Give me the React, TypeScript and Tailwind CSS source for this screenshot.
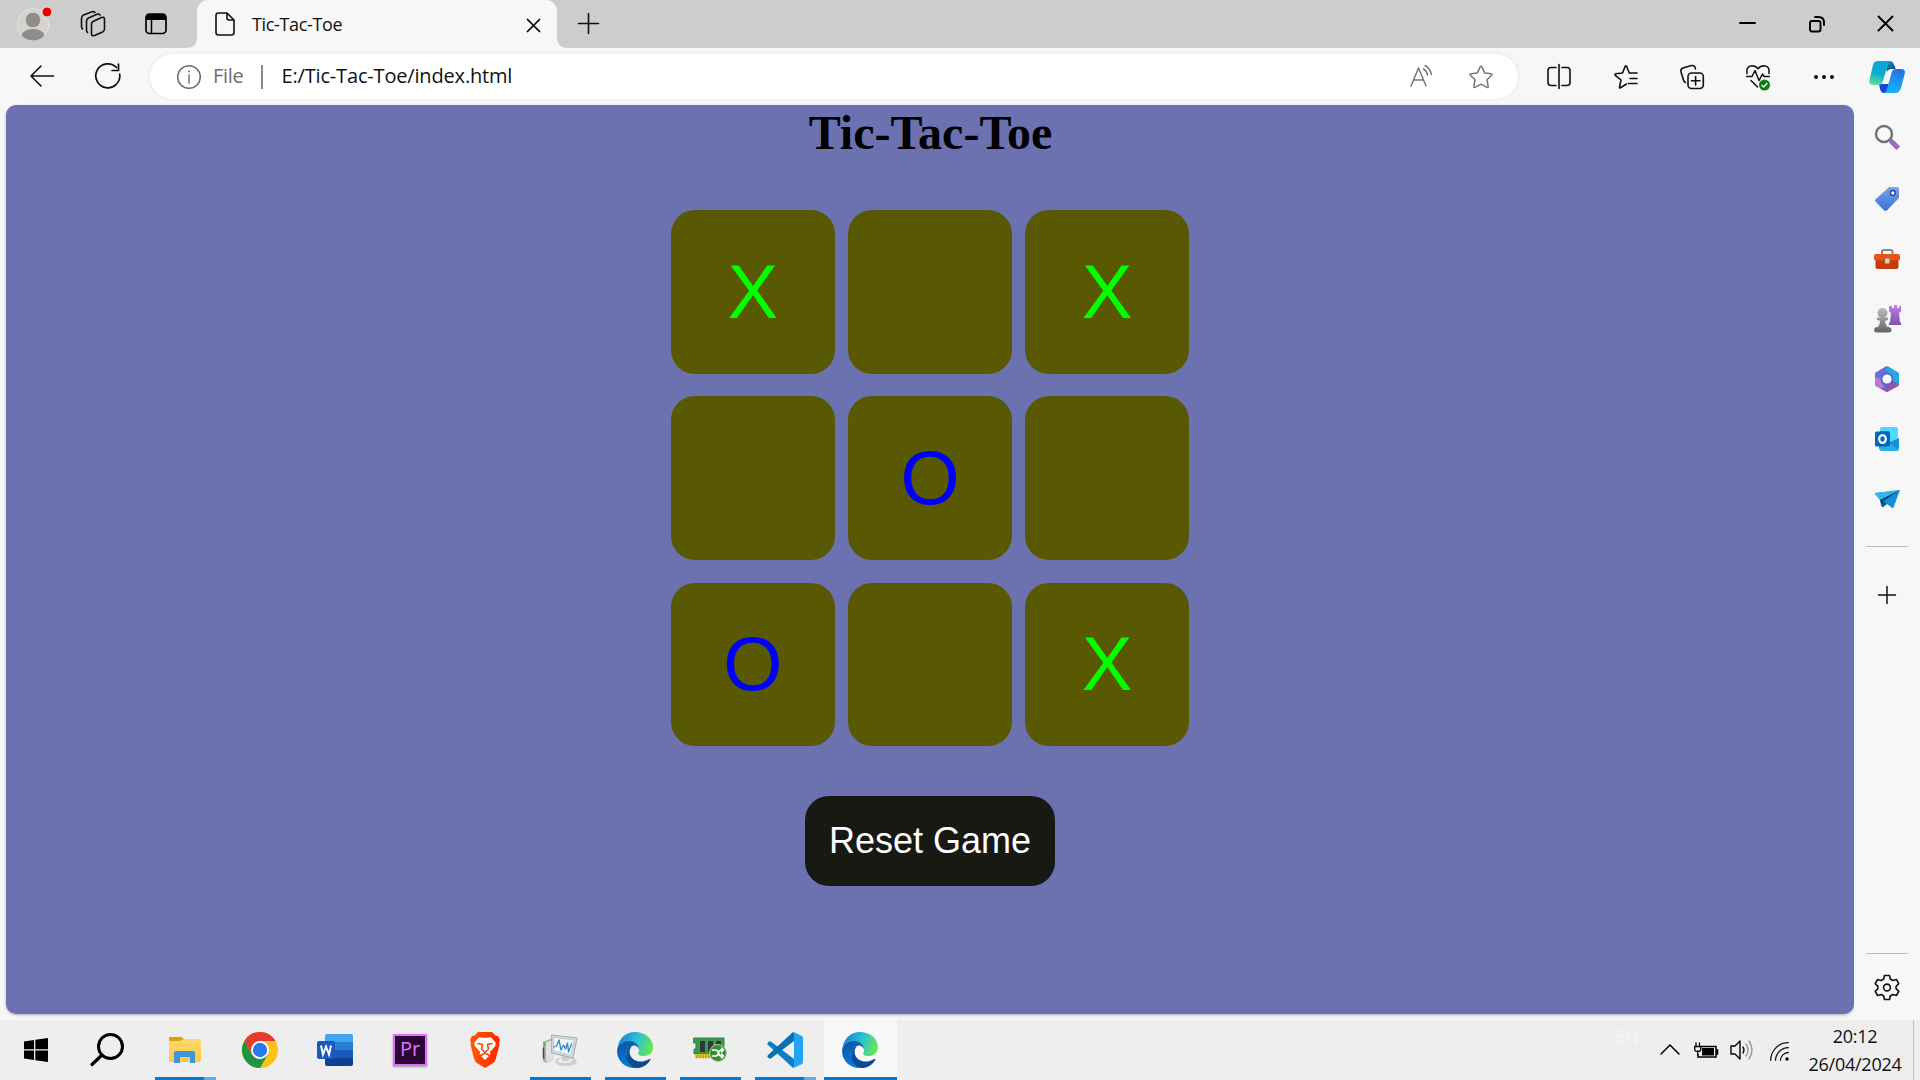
import type { ReactNode } from "react";

type IconProps = { w: number; h: number; children: ReactNode; className?: string };

function Icon({ w, h, children, className = "" }: IconProps) {
  return (
    <svg width={w} height={h} viewBox={`0 0 ${w} ${h}`} fill="none" strokeLinecap="round" strokeLinejoin="round" className={`shrink-0 overflow-visible ${className}`}>
      {children}
    </svg>
  );
}

function Slot({ className, children }: { className: string; children: ReactNode }) {
  return <div className={`flex shrink-0 items-center justify-center ${className}`}>{children}</div>;
}

function TabStrip() {
  return (
    <header className="flex h-12 bg-[#cdcdcd] text-black">
      <Slot className="ml-3 w-[42px]">
        <Icon w={36} h={36}>
          <circle cx="18" cy="18.500" r="16" fill="#d4d3d0" stroke="#e3e2df" />
          <circle cx="18" cy="14" r="7.300" fill="#8f8c89" />
          <path d="M6.500 29.500C8 25 12.500 23 18 23s10 2 11.500 6.500A16 16 0 0 1 18 34.500 16 16 0 0 1 6.500 29.500Z" fill="#8f8c89" />
          <circle cx="32" cy="6" r="5" fill="#e60000" stroke="#f2dede" />
        </Icon>
      </Slot>
      <Slot className="ml-[18px] w-[42px]">
        <Icon w={26} h={26}>
          <g stroke="#111" strokeWidth="1.600">
            <path d="M13 10.500 21.500 6.500Q24.500 5.500 24.500 8.500V18Q24.500 20 22.500 21L14.500 24.500Q11.500 25.500 11.500 22.500V13Q11.500 11.200 13 10.500Z" />
            <path d="M7.500 21.500Q6.500 20.500 6.500 19V10Q6.500 8 8.500 7L17 3.300Q19 2.500 20 4" />
            <path d="M2.500 18Q1.500 17 1.500 15.500V7.500Q1.500 5 3.500 4L12 .8Q14 .3 15 1.500" />
          </g>
        </Icon>
      </Slot>
      <Slot className="ml-[21px] w-[42px]">
        <Icon w={22} h={22}>
          <rect x="1" y="1" width="20" height="19.500" rx="3.500" stroke="#000" strokeWidth="1.700" />
          <path d="M1 7V4q0-3 3-3h14q3 0 3 3v3Z" fill="#000" />
          <path d="M6.500 7v13" stroke="#000" strokeWidth="1.500" />
        </Icon>
      </Slot>
      <div className="ml-[9px] flex w-[382px] items-stretch">
        <div className="flex w-[11px] items-end">
          <Icon w={11} h={11}><path d="M11 0v11H0Q11 11 11 0" fill="#f7f7f7" /></Icon>
        </div>
        <div className="flex h-12 w-[360px] items-center rounded-t-[11px] bg-[#f7f7f7] pl-[18px]">
          <Icon w={20} h={24}>
            <path d="M3.500 1H12l7 7v12.500Q19 23 16.500 23h-13Q1 23 1 20.500v-17Q1 1 3.500 1ZM12 1v5q0 2 2 2h5" stroke="#111" strokeWidth="1.600" />
          </Icon>
          <span className="ml-[17px] w-[257px] shrink-0 whitespace-nowrap font-['Open_Sans',sans-serif] text-[18px] leading-6 tracking-[-0.35px] text-[#111]">Tic-Tac-Toe</span>
          <Slot className="w-[48px]">
            <Icon w={13} h={13} className="mt-[2px]"><path d="m.5.500 12 12m0-12-12 12" stroke="#000" strokeWidth="1.700" /></Icon>
          </Slot>
        </div>
        <div className="flex w-[11px] items-end">
          <Icon w={11} h={11}><path d="M0 0v11h11Q0 11 0 0" fill="#f7f7f7" /></Icon>
        </div>
      </div>
      <Slot className="w-10">
        <Icon w={21} h={21} className="-mt-px"><path d="M10.500.5v20M.5 10.500h20" stroke="#111" strokeWidth="1.600" /></Icon>
      </Slot>
      <div className="ml-auto flex">
        <Slot className="w-[69px]"><Icon w={15} h={2} className="-mt-[2px]"><path d="M0 1h15" stroke="#000" strokeWidth="2" /></Icon></Slot>
        <Slot className="w-[69px]">
          <Icon w={16} h={16} className="-mt-px">
            <rect x="1" y="5" width="10.500" height="10.500" rx="2" stroke="#000" strokeWidth="1.900" />
            <path d="M6 1h3.500Q15 1 15 6.500V9" stroke="#000" strokeWidth="1.900" />
          </Icon>
        </Slot>
        <Slot className="w-[69px]"><Icon w={15} h={15} className="-mt-px"><path d="m.5.5 14 14m0-14-14 14" stroke="#000" strokeWidth="1.900" /></Icon></Slot>
      </div>
    </header>
  );
}

function Copilot() {
  return (
    <Icon w={36} h={34}>
      <defs>
        <linearGradient id="cpA" x1="10" y1="0" x2="4" y2="25" gradientUnits="userSpaceOnUse"><stop stopColor="#08a8dd" /><stop offset=".5" stopColor="#0ba9cf" /><stop offset="1" stopColor="#63e29a" /></linearGradient>
        <linearGradient id="cpB" x1="30" y1="9" x2="22" y2="33" gradientUnits="userSpaceOnUse"><stop stopColor="#2870df" /><stop offset="1" stopColor="#15b6fb" /></linearGradient>
        <linearGradient id="cpC" x1="18" y1="2" x2="26" y2="11" gradientUnits="userSpaceOnUse"><stop stopColor="#0b96c0" /><stop offset="1" stopColor="#0a4776" /></linearGradient>
      </defs>
      <path d="M15 1h5q4 0 5.200 4l1.500 4H23q-4 0-5 3Z" fill="url(#cpC)" />
      <path d="M10 24h10l-2 9h-3q-3 0-4-4Z" fill="#1548d5" />
      <path d="M9 1h14q-3 0-4 3l-5 17q-1 4-5 4H4Q-1 25 .7 19L4 5Q5 1 9 1Z" fill="url(#cpA)" />
      <path d="M27 9h5q5 0 3.700 5L32 28q-1.500 5-6 5H14q3 0 4-4l4.500-16Q23.500 9 27 9Z" fill="url(#cpB)" />
    </Icon>
  );
}

function Toolbar() {
  return (
    <div className="flex h-[57px] items-center bg-[#f7f7f7]">
      <Slot className="ml-[9px] w-[66px]">
        <Icon w={24} h={22} className="-mt-px"><path d="M23.500 11H1M11 1 1 11l10 10" stroke="#111" strokeWidth="1.600" /></Icon>
      </Slot>
      <Slot className="w-[66px]">
        <Icon w={26} h={26} className="-mt-px"><path d="M24.700 11A12 12 0 1 1 21.500 4.500M23.500 1v6.500H17" stroke="#111" strokeWidth="1.700" /></Icon>
      </Slot>
      <div className="ml-[9px] flex h-[45px] w-[1368px] items-center rounded-full bg-white font-['Open_Sans',sans-serif] text-[20px] leading-7 shadow-[0_0_4px_rgba(0,0,0,0.09)]">
        <Icon w={24} h={24} className="ml-[27px]">
          <circle cx="12" cy="12" r="11.300" stroke="#6e6e6e" strokeWidth="1.500" />
          <path d="M12 10v8" stroke="#6e6e6e" strokeWidth="1.500" /><circle cx="12" cy="6.500" r="1" fill="#6e6e6e" />
        </Icon>
        <span className="mb-px ml-3 w-[47px] whitespace-nowrap tracking-[-0.3px] text-[#6e6e6e]">File</span>
        <span className="ml-px h-6 w-[1.500px] bg-[#8b8b8b]" />
        <span className="mb-px ml-[19px] whitespace-nowrap tracking-[-0.17px] text-[#111]">E:/Tic-Tac-Toe/index.html</span>
        <div className="ml-auto mr-[8px] flex">
          <Slot className="w-[59px]">
            <Icon w={24} h={24} className="-mt-px">
              <g stroke="#777" strokeWidth="1.500"><path d="m1 22 7.500-18L16 22M3.700 16h9.600" /><path d="M13.500 5q3.500 2 4 6M15 1.500q5 2.500 6.500 9" /></g>
            </Icon>
          </Slot>
          <Slot className="w-[59px]">
            <Icon w={24} h={24}><path d="M12 1.200q.6 0 1 .9l2.600 5.800 6.500.8q1.600.3.500 1.600L18 14.800l1.200 6.700q.2 1.500-1.200.9L12 19.200l-6 3.200q-1.400.6-1.200-.9L6 14.800 1.400 10.300Q.3 9 1.900 8.700l6.500-.8L11 2.100q.4-.9 1-.9Z" stroke="#777" strokeWidth="1.500" /></Icon>
          </Slot>
        </div>
      </div>
      <Slot className="ml-[7px] w-[67px]">
        <Icon w={24} h={25}><path d="M9 3.500H4q-3 0-3 3v12q0 3 3 3h5M15 3.500h5q3 0 3 3v12q0 3-3 3h-5M12 .5v24" stroke="#111" strokeWidth="1.600" /></Icon>
      </Slot>
      <Slot className="w-[67px]">
        <Icon w={24} h={24}><path d="m12.500 19-6 3.800q-1.200.5-1-.8L7 15 1.300 10.300q-1-1.200.5-1.500L8.500 8 11 1.700q.9-1.700 1.800 0L15.300 8H23M16 13.500h7M14.500 18.500H23" stroke="#111" strokeWidth="1.600" /></Icon>
      </Slot>
      <Slot className="w-[66px]">
        <Icon w={24} h={24}>
          <rect x="8" y="8" width="15.300" height="15.500" rx="3.500" stroke="#111" strokeWidth="1.600" />
          <path d="M15.600 11.500v8.500M11.400 15.700H20M5.500 17.500Q4 17 3.500 15L1 7Q.3 4 3 3l8.500-2.500Q15 0 15.500 4" stroke="#111" strokeWidth="1.600" />
        </Icon>
      </Slot>
      <Slot className="w-[66px]">
        <Icon w={24} h={26}>
          <path d="M1 9.500Q-.2 2 6 1.700q3.500 0 6 3 2.500-3 6-3 6.200.3 5 7.800M.7 12.500H6l3-6 4 10 3.500-6.500 1.500 2.500h5.300M5 16.500l6.500 6.500" stroke="#111" strokeWidth="1.500" />
          <circle cx="18.500" cy="21" r="5.500" fill="#107c10" /><path d="m16 21.500 1.700 1.500 3.200-3.500" stroke="#fff" strokeWidth="1.300" />
        </Icon>
      </Slot>
      <Slot className="w-[65px]">
        <Icon w={20} h={4}><circle cx="2" cy="2" r="2" fill="#111" /><circle cx="10" cy="2" r="2" fill="#111" /><circle cx="18" cy="2" r="2" fill="#111" /></Icon>
      </Slot>
      <Slot className="w-[62px]"><Copilot /></Slot>
    </div>
  );
}

const board = ["X", "", "X", "", "O", "", "O", "", "X"];

function Game() {
  return (
    <main className="ml-[6px] flex h-[909px] w-[1848px] shrink-0 flex-col items-center rounded-[10px] bg-[#6c71b0] shadow-[0_1px_3px_rgba(0,0,0,0.3)]">
      <h1 className="h-[105px] pl-px font-['Liberation_Serif',serif] text-[48px] font-bold leading-[56px] text-black">Tic-Tac-Toe</h1>
      <div className="grid grid-cols-[repeat(3,163.600px)] gap-x-[13.600px] gap-y-[22.700px]">
        {board.map((mark, i) => (
          <button key={i} className={`h-[163.600px] rounded-[24px] bg-[#595903] font-['Liberation_Sans',sans-serif] text-[76px] leading-none ${mark === "X" ? "text-[#00ff00]" : "text-[#0000ff]"}`}>{mark}</button>
        ))}
      </div>
      <button className="mt-[50px] h-[90px] w-[250px] rounded-[24px] bg-[#191913] font-['Liberation_Sans',sans-serif] text-[36px] leading-none text-white">Reset Game</button>
    </main>
  );
}

function Sidebar() {
  return (
    <aside className="flex w-[66px] flex-col items-center bg-[#f7f7f7]">
      <Slot className="mt-px h-[62px]">
        <Icon w={26} h={26}>
          <circle cx="10" cy="10" r="8" stroke="#747474" strokeWidth="2.500" fill="#fafafa" />
          <path d="m16 16 2 2" stroke="#777" strokeWidth="3" /><path d="m18.500 18.500 4 4" stroke="#9a67cd" strokeWidth="5" strokeLinecap="square" />
        </Icon>
      </Slot>
      <Slot className="h-[61px]">
        <Icon w={24} h={24}>
          <defs><linearGradient id="tag" x1="0" y1="0" x2="0" y2="1"><stop stopColor="#73a6ef" /><stop offset="1" stopColor="#416ed1" /></linearGradient></defs>
          <path d="M14.500 0H22q2 0 2 2v8q0 1-1 2L12 23.200q-1.500 1.200-3 0L.8 15q-1.600-1.500 0-3L13 1q.5-1 1.500-1Z" fill="url(#tag)" />
          <circle cx="17.800" cy="6" r="2.400" fill="#fff" stroke="#244b91" strokeWidth="1.500" />
        </Icon>
      </Slot>
      <Slot className="h-[60px]">
        <Icon w={26} h={20}>
          <path d="M8 5V3q0-2 2-2h6.500q2 0 2 2v2" stroke="#858585" strokeWidth="2" />
          <path d="M1.500 10h23v8q0 2-2 2h-19q-2 0-2-2Z" fill="#c63d0b" /><path d="M2 5h22q2 0 2 2v3.500q0 .8-1 .8H1q-1 0-1-.8V7q0-2 2-2Z" fill="#e35415" />
          <rect x="11" y="9.500" width="4.500" height="5" rx="1" fill="#cfcfcf" />
        </Icon>
      </Slot>
      <Slot className="h-[60px]">
        <Icon w={27} h={28}>
          <defs>
            <linearGradient id="rook" x1="0" y1="0" x2="0" y2="1"><stop stopColor="#ba80e6" /><stop offset="1" stopColor="#7e53a8" /></linearGradient>
            <linearGradient id="pawn" x1="0" y1="3" x2="0" y2="27" gradientUnits="userSpaceOnUse"><stop stopColor="#bcbcbc" /><stop offset="1" stopColor="#666" /></linearGradient>
          </defs>
          <path d="M15 1h3v2h2V0h3v3h2V1h2v5q0 1-2 2l1 9q2 1 1 3H15q-1-2 1-3l1-9q-2-1-2-3Z" fill="url(#rook)" />
          <circle cx="8.500" cy="8" r="5" fill="url(#pawn)" /><path d="M3 12.500h11q1 2-1 3h-2q0 4 2.500 6.500h1.500q2.500.5 2.500 3t-3 2.500H3q-3 0-3-2.500T2.500 22H4q2-2.500 2-6.500H4q-2-1-1-3Z" fill="url(#pawn)" />
        </Icon>
      </Slot>
      <Slot className="h-[60px]">
        <Icon w={24} h={26}>
          <path d="M11 .600Q12 0 13 .600L23 6.500q1 .700 1 2V18q0 1.200-1 2l-10 5.500q-1 .6-2 0L1 20q-1-.8-1-2V8.500q0-1.300 1-2Z" fill="#506bd0" />
          <path d="M11 .600 1 6.500q-1 .700-1 2V18q0 1.200 1 2l5 2.700V11q0-2 2-3l3-2q2-3 0-5.400Z" fill="#6c6fd0" />
          <path d="M0 12V18q0 1.200 1 2l5 2.700 4-2.200Q6 18 6 14.500Q4 11 0 12Z" fill="#ba78da" />
          <path d="M24 17v1q0 1.200-1 2l-10 5.500q-1 .6-2 0L6 22.700l10-5.500q2-1 2-4Z" fill="#8d57ad" />
          <path d="M13 .600 23 6.500q1 .700 1 2V17q-1 1-2.500 0L18 14.500V11q0-2-2-3l-3.500-2Q9 3 13 .600Z" fill="#26a9df" />
          <circle cx="12" cy="13" r="4.600" fill="#f9f9f9" />
        </Icon>
      </Slot>
      <Slot className="h-[60px]">
        <Icon w={24} h={24}>
          <rect x="5" y="0" width="18" height="15" rx="2" fill="#50d9ff" /><path d="M5 4h9v10H5Z" fill="#119be0" />
          <path d="M24 11v10q0 2-2 2H7l-3-2V12l9 4Z" fill="#1492d6" /><path d="m13 16 11 6.500q-.5 1.500-2 1.500H6q-2-1-2-3Z" fill="#27b0e5" />
          <rect y="4.500" width="15" height="15" rx="1.500" fill="#0768ba" /><ellipse cx="7.500" cy="12" rx="3.300" ry="3.900" stroke="#fff" strokeWidth="2.200" />
        </Icon>
      </Slot>
      <Slot className="h-[60px]">
        <Icon w={25} h={19}>
          <path d="M0 3 25 0 18.500 17.500q-.5 1-1.500.3L12 14l-4 3-1.500-.5L5 10 .500 4.500Q-.5 3.300 0 3Z" fill="#178fd5" /><path d="M0 3 25 0 5 10 .500 4.500Q-.5 3.300 0 3Z" fill="#32b8e6" /><path d="m5 10 20-10L8.500 11l-1.500 6Z" fill="#0a427f" /><path d="m8.500 11 3.500 3-5 3.500Z" fill="#0c579b" />
        </Icon>
      </Slot>
      <div className="mt-[17px] h-px w-[42px] bg-[#bcbcbc]" />
      <Slot className="mr-px mt-[39px] h-[18px]"><Icon w={18} h={18}><path d="M9 .5v17M.5 9h17" stroke="#111" strokeWidth="1.500" /></Icon></Slot>
      <div className="mt-[349px] h-px w-[42px] bg-[#bcbcbc]" />
      <Slot className="mt-[20px] h-[26px]">
        <Icon w={26} h={26}>
          <path d="M10.500 1.500h5l.8 3.500 2.500 1.500 3.600-1 2.400 4.200-2.700 2.600v2.400l2.700 2.600-2.400 4.200-3.600-1-2.500 1.500-.8 3.500h-5L9.700 22l-2.500-1.500-3.600 1-2.400-4.200 2.700-2.600v-2.400L1.200 9.700l2.400-4.200 3.600 1L9.700 5Z" stroke="#111" strokeWidth="1.600" /><circle cx="13" cy="13.500" r="3.400" stroke="#111" strokeWidth="1.600" />
        </Icon>
      </Slot>
    </aside>
  );
}

function EdgeLogo({ id }: { id: string }) {
  return (
    <Icon w={36} h={36}>
      <defs>
        <linearGradient id={`${id}g`} x1="4" y1="7" x2="34" y2="18" gradientUnits="userSpaceOnUse"><stop stopColor="#168eda" /><stop offset=".5" stopColor="#2fc3cf" /><stop offset="1" stopColor="#67e850" /></linearGradient>
        <linearGradient id={`${id}b`} x1="7" y1="10" x2="14" y2="35" gradientUnits="userSpaceOnUse"><stop stopColor="#0c59a4" /><stop offset="1" stopColor="#087dde" /></linearGradient>
        <linearGradient id={`${id}d`} x1="10" y1="18" x2="29" y2="33" gradientUnits="userSpaceOnUse"><stop stopColor="#0a529a" /><stop offset="1" stopColor="#12458c" /></linearGradient>
      </defs>
      <path d="M.5 17C1 7 8.500 0 18 0c10 0 18 6.500 18 15 0 6-4 9-9.500 9-4 0-6-1.500-5.200-3 2.200-3.500.2-10-7.800-10C6 11 1 14 .5 17Z" fill={`url(#${id}g)`} />
      <path d="M.2 17C2 12 7 9 12.500 9c5.500 0 10 4.500 9.500 9-.3-3-3-4.500-5-4.500-3.500 0-7.500 4.500-7.500 9.500C9.500 29 14 34 19.500 36 8 37-1 28 .2 17Z" fill={`url(#${id}b)`} />
      <path d="M15 14.500c-3 2-3.500 8 .5 12 5 4.500 12 3.500 17 .5.800-.3 1.300.2.800 1C30 33.500 25 36 19.500 36 13 35 8.500 29 9.300 22.500 10 18 12 15 15 14.500Z" fill={`url(#${id}d)`} />
    </Icon>
  );
}

function TaskButton({ children, bar = "none" }: { children: ReactNode; bar?: "none" | "one" | "many" | "active" }) {
  return (
    <div className={`flex h-[60px] flex-col items-center ${bar === "active" ? "mx-px w-[73px] bg-[#f8f8f8]" : "w-[75px]"}`}>
      <div className="flex h-[57px] items-center justify-center pr-px pt-[3px]">{children}</div>
      {bar === "one" && <div className="h-[3px] w-[61px] bg-[#0078d7]" />}
      {bar === "active" && <div className="h-[3px] w-[73px] bg-[#0078d7]" />}
      {bar === "many" && <div className="flex h-[3px] w-[61px] bg-[#66abe6]"><div className="w-[49px] bg-[#0078d7]" /></div>}
    </div>
  );
}

function Taskbar() {
  return (
    <footer className="flex h-[60px] bg-[#eee]">
      <Slot className="w-[72px]">
        <Icon w={24} h={24}><path d="M0 3.500 10 2v9.300H0ZM11.300 1.800 24 0v11.300H11.300ZM0 12.500h10V22L0 20.500ZM11.300 12.500H24V24l-12.700-1.800Z" fill="#000" /></Icon>
      </Slot>
      <Slot className="w-[71px]">
        <Icon w={34} h={34} className="mr-px"><circle cx="20.500" cy="13.500" r="12" stroke="#000" strokeWidth="3" /><path d="M12 22 2 31.500" stroke="#000" strokeWidth="3.200" /></Icon>
      </Slot>
      <div className="ml-[5px] flex">
        <TaskButton bar="many">
          <Icon w={32} h={27}>
            <defs><linearGradient id="fold" x1="0" y1="0" x2="0" y2="1"><stop stopColor="#ffda71" /><stop offset="1" stopColor="#fbc840" /></linearGradient></defs>
            <path d="M1 0h11l3 2v3H0V1q0-1 1-1Z" fill="#dda20a" /><path d="M0 4h11l4-2h15q2 0 2 2v19q0 2-2 2H2q-2 0-2-2Z" fill="url(#fold)" />
            <path d="M5 26V16q0-2 2-2h17q2 0 2 2v10h-5v-6H11v6Z" fill="#3c97dc" />
          </Icon>
        </TaskButton>
        <TaskButton>
          <Icon w={36} h={36}>
            <circle cx="18" cy="18" r="18" fill="#fbc116" /><path d="M2.400 9A18 18 0 0 1 33.600 9H18l-8 13Z" fill="#e33b2e" /><path d="M2.400 9A18 18 0 0 0 18 36l7.800-13.500L18 27l-8-4.500Z" fill="#229342" />
            <circle cx="18" cy="18" r="9" fill="#fff" /><circle cx="18" cy="18" r="7.200" fill="#2879ec" />
          </Icon>
        </TaskButton>
        <TaskButton>
          <Icon w={36} h={32}>
            <path d="M10 0h24q2 0 2 2v6H8V2q0-2 2-2Z" fill="#41a5ee" /><path d="M8 8h28v8H8Z" fill="#2b7cd3" /><path d="M8 16h28v8H8Z" fill="#185abd" /><path d="M8 24h28v6q0 2-2 2H10q-2 0-2-2Z" fill="#103f91" />
            <rect y="7" width="18" height="18" rx="2" fill="#185abd" /><path d="m4 11.500 2 9 3-8 3 8 2-9" stroke="#fff" strokeWidth="2" strokeLinejoin="miter" strokeLinecap="butt" />
          </Icon>
        </TaskButton>
        <TaskButton>
          <div className="flex h-8 w-[34px] items-center justify-center border-2 border-[#df6bff] bg-[#2a0634] pb-[3px] font-['Open_Sans',sans-serif] text-[20px] leading-none text-[#df78f8] shadow-[0_1px_2px_#999]">Pr</div>
        </TaskButton>
        <TaskButton>
          <Icon w={30} h={36}>
            <defs><linearGradient id="brave"><stop stopColor="#ff5a08" /><stop offset="1" stopColor="#ff2600" /></linearGradient></defs>
            <path d="M8 0h14l3.300 3.600L28 4l2 4-1 3 .5 2-3.700 14q-.8 3-3 4.300L15 36l-7.800-4.700q-2.200-1.300-3-4.300L.5 13 1 11 0 8l2-4 2.700-.4Z" fill="url(#brave)" />
            <path d="m15 6 6-.8 4.500 5.300q.5 2.500-.8 4.300L20 19.700l.2 3L15 28l-5.200-5.300.2-3-4.700-4.900q-1.300-1.800-.8-4.300L9 5.200Z" fill="#fff" />
            <path d="m8 11.500 4.500 1-1 4.500 3.500 3.500 3.500-3.500-1-4.500 4.500-1M10.500 23.500l4.500-2.500 4.500 2.500" stroke="#ff4205" strokeWidth="1.500" />
          </Icon>
        </TaskButton>
        <TaskButton bar="one">
          <Icon w={36} h={32}>
            <path d="m1 8 7-3 4 1v19l-8 4-3-2Z" fill="#a9acae" /><path d="m4 8 8-2v19l-8 3Z" fill="#dfe1e2" /><path d="M1.500 10h2" stroke="#3ec72c" strokeWidth="3" strokeLinecap="butt" /><path d="M1.500 14v10" stroke="#444" strokeWidth="1.500" />
            <ellipse cx="24" cy="27.500" rx="11" ry="4.500" fill="#cfcfcf" /><ellipse cx="23" cy="26.500" rx="7" ry="2.500" fill="#eee" /><path d="m20 20 7 1v6h-7Z" fill="#ccc" />
            <path d="m10 1 25 3-4 20-21-5Z" fill="#d8dbdd" stroke="#aaa" /><path d="m12 3.500 20 2.300L29 21l-17-4Z" fill="#edf7fd" stroke="#9bc4dd" strokeWidth=".7" />
            <path d="m12 13 2.500-1L17 6l2 10 2.500-5 2 4 2-6 1 9 3-8" stroke="#3b88b8" strokeWidth="1.300" />
          </Icon>
        </TaskButton>
        <TaskButton bar="one"><EdgeLogo id="e1" /></TaskButton>
        <TaskButton bar="one">
          <Icon w={34} h={26}>
            <path d="M1 1h30v16H1v-5h2V6H1Z" fill="#3b9a4e" stroke="#357e42" /><path d="M2 17h29v4H2Z" fill="#e4c91c" /><path d="M4 18v3m3-3v3m3-3v3m3-3v3m3-3v3" stroke="#a38c17" />
            <path d="M7 4h5v11H7Zm8 0h5v11h-5Zm8 0h5v9h-5Z" fill="#35353a" /><circle cx="25" cy="16" r="8.500" fill="#32912f" stroke="#b5ccb5" />
            <path d="M19.500 13h2.500q3 0 3.500 3t3.500 3h1m-10.500 0h2.500q3 0 3.500-3t3.500-3h1m-1.500-2 2 2-2 2m0 2 2 2-2 2" stroke="#fff" strokeWidth="1.600" />
          </Icon>
        </TaskButton>
        <TaskButton bar="many">
          <Icon w={36} h={36}>
            <path d="M1 10.500Q2.500 8.500 4.500 10L27 27v8.500q-1 .5-2-.5L1 13Q-.5 12 1 10.500Z" fill="#0d7fc9" /><path d="M1 25.500Q2.500 27.500 4.500 26L27 9V.5q-1-.5-2 .5L1 23q-1.500 1-0 2.500Z" fill="#0871b3" /><path d="M27 .3 35 4q1 .5 1 1.700v24.600q0 1.200-1 1.700l-8 3.700q-1 .3-2-.7 2 .5 2-1.500v-31Q27 .5 25 1q1-1 2-.7Z" fill="#22a4f2" />
          </Icon>
        </TaskButton>
        <TaskButton bar="active"><EdgeLogo id="e2" /></TaskButton>
      </div>
      <div className="ml-auto flex items-center">
        <span className="mb-[28px] mr-[14px] font-['Open_Sans',sans-serif] text-[18px] font-light leading-none text-[#fbf8f2]">EN</span>
        <Slot className="w-[35px]"><Icon w={18} h={10}><path d="m0 9 9-9 9 9" stroke="#000" strokeWidth="1.500" /></Icon></Slot>
        <Slot className="w-[36px]">
          <Icon w={24} h={17}>
            <path d="M7 4.500h15V15H4v-3M22 8h1.500v4H22" stroke="#000" strokeWidth="1.500" strokeLinecap="butt" strokeLinejoin="miter" /><path d="M8 6h12v7.500H8Z" fill="#000" />
            <path d="M2 1v3m3.500-3v3M.7 4.500h6v3q0 2-3 2t-3-2ZM3.700 9v4" stroke="#000" strokeWidth="1.300" />
          </Icon>
        </Slot>
        <Slot className="w-[36px]">
          <Icon w={24} h={20}><path d="M1 6h4l5-5v18l-5-5H1Z" stroke="#000" strokeWidth="1.400" /><path d="M13 7q2 3 0 6" stroke="#111" strokeWidth="1.400" /><path d="M16 4q4 6 0 12M19 1q6 9 0 18" stroke="#999" strokeWidth="1.400" /></Icon>
        </Slot>
        <Slot className="w-[39px]">
          <Icon w={19} h={19} className="mt-[2px]"><path d="M.7 18.300A17.600 17.600 0 0 1 18.300.7M5.500 18.300A13 13 0 0 1 18.300 5.700M10.500 18.300a8 8 0 0 1 7.800-7.800" stroke="#111" strokeWidth="1.300" /><circle cx="17" cy="17" r="1.700" fill="#000" /></Icon>
        </Slot>
        <div className="w-[114px] pr-px text-center font-['Open_Sans',sans-serif] text-[18px] leading-[28px] tracking-[-0.25px] text-[#111]">
          <div>20:12</div><div>26/04/2024</div>
        </div>
        <div className="mr-[6px] h-[60px] w-[1.500px] bg-[#bebebe]" />
      </div>
    </footer>
  );
}

export default function App() {
  return (
    <div className="flex h-[1080px] w-[1920px] flex-col overflow-hidden bg-[#f7f7f7]">
      <TabStrip />
      <Toolbar />
      <div className="flex h-[915px]"><Game /><Sidebar /></div>
      <Taskbar />
    </div>
  );
}
